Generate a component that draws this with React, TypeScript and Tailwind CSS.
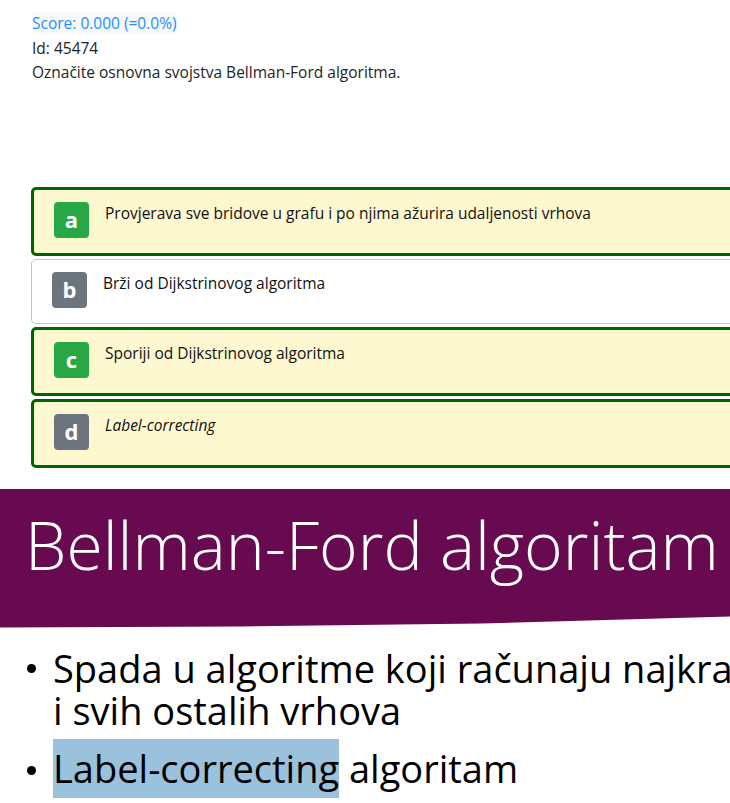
import React from "react";

const options = [
  { l: "a", text: "Provjerava sve bridove u grafu i po njima ažurira udaljenosti vrhova", sel: true, green: true, italic: false },
  { l: "b", text: "Brži od Dijkstrinovog algoritma", sel: false, green: false, italic: false },
  { l: "c", text: "Sporiji od Dijkstrinovog algoritma", sel: true, green: true, italic: false },
  { l: "d", text: "Label-correcting", sel: true, green: false, italic: true },
];

export default function App() {
  return (
    <div className="relative w-[730px] h-[803px] overflow-hidden bg-white">
      <div
        className="pl-8 pt-[11px] text-[15.5px] leading-[24.5px] text-[#212529]"
        style={{ fontFamily: '"Open Sans", "Noto Sans", sans-serif' }}
      >
        <div>
          <span className="text-[#1e8fff] bg-[#f7f9fb]">Score: 0.000 (=0.0%)</span>
        </div>
        <div>Id: 45474</div>
        <div>Označite osnovna svojstva Bellman-Ford algoritma.</div>
      </div>

      <div
        className="ml-[31px] mt-[102px] w-[760px] flex flex-col gap-[3px] text-[15.5px] text-[#111]"
        style={{ fontFamily: '"Open Sans", "Noto Sans", sans-serif' }}
      >
        {options.map((o) => (
          <div
            key={o.l}
            className={
              o.sel
                ? "flex items-start gap-4 rounded-[5px] border-[3px] border-[#006400] bg-[#fdf8cf] pl-5 pt-3 pb-[15px]"
                : "flex items-start gap-4 rounded-[5px] border border-[#c4c4c4] bg-white pl-5 pt-3 pb-[15px]"
            }
          >
            <div
              className={
                o.green
                  ? "flex h-[36px] w-[35px] shrink-0 items-center justify-center rounded-[4px] bg-[#28a745] text-[22px] font-bold text-white"
                  : "flex h-[36px] w-[35px] shrink-0 items-center justify-center rounded-[4px] bg-[#6c757d] text-[22px] font-bold text-white"
              }
            >
              {o.l}
            </div>
            <div className={o.italic ? "italic leading-[22px]" : "leading-[22px]"}>{o.text}</div>
          </div>
        ))}
      </div>

      <div style={{ fontFamily: '"Open Sans", Lato, sans-serif' }}>
        <div className="mt-[21px] h-[140px] bg-[#670a4f] pl-[25px] pt-[22px] [clip-path:polygon(0_0,100%_0,100%_128px,66%_135px,33%_138px,0_139px)]">
          <div className="whitespace-nowrap text-[66px] font-light leading-none text-white">Bellman-Ford algoritam</div>
        </div>
        <div className="pt-[18px] text-[38px] leading-[42px] text-black">
          <div className="flex items-start whitespace-nowrap pl-[27px]">
            <span className="mt-[17px] mr-[17px] h-[9px] w-[9px] shrink-0 rounded-full bg-black" />
            <span>
              Spada u algoritme koji računaju najkraće putove između jednog vrha
              <br />i svih ostalih vrhova
            </span>
          </div>
          <div className="mt-[8px] flex items-start whitespace-nowrap pl-[27px] leading-[59px]">
            <span className="mt-[27px] mr-[17px] h-[9px] w-[9px] shrink-0 rounded-full bg-black" />
            <span>
              <span className="bg-[#9bc2dc] inline-block">Label-correcting</span> algoritam
            </span>
          </div>
        </div>
      </div>
    </div>
  );
}
